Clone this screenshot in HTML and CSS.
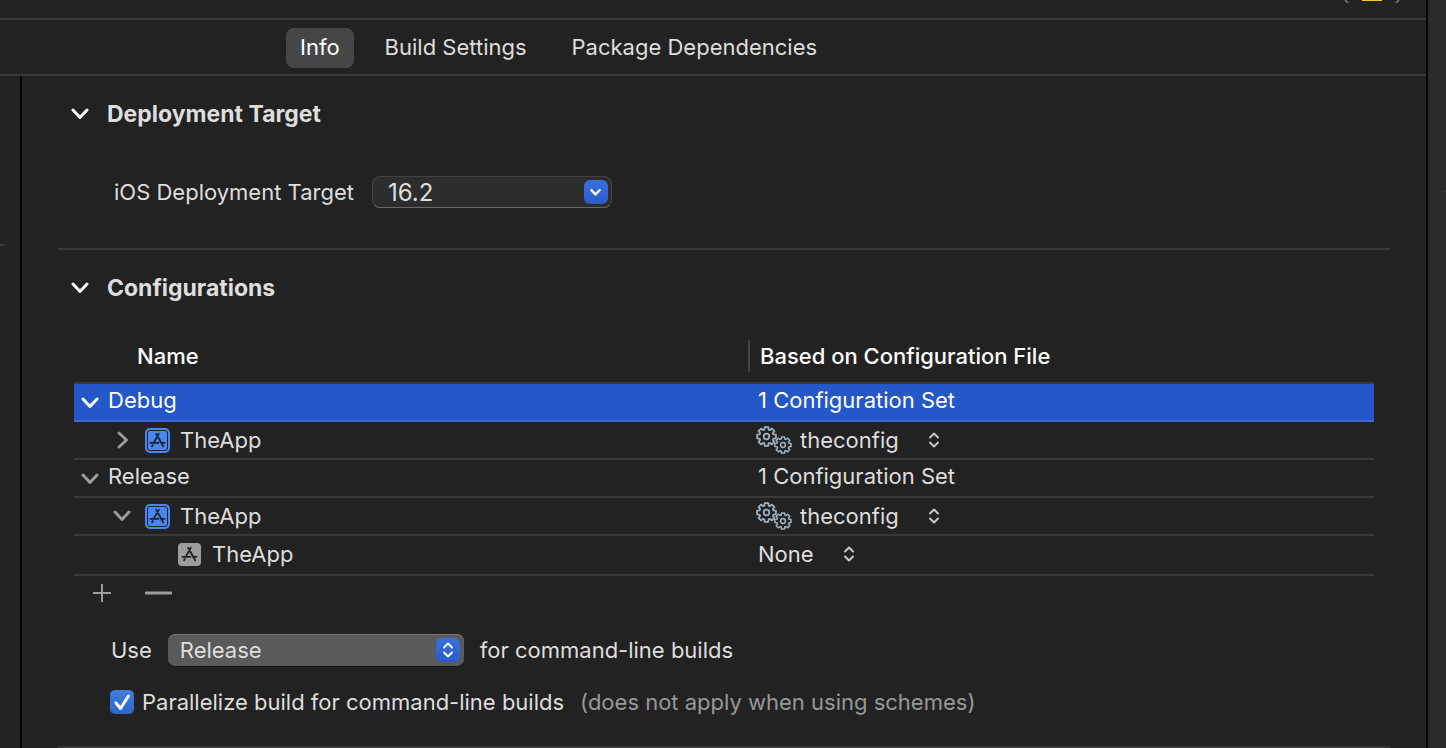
FILE: index.html
```html
<!DOCTYPE html>
<html lang="en">
<head>
<meta charset="utf-8">
<title>Project Info</title>
<link rel="stylesheet" href="styles.css">
</head>
<body>
<svg class="defs" aria-hidden="true">
  <symbol id="down" viewBox="0 0 18 12"><path d="M2 2l7 7.500L16 2"/></symbol>
  <symbol id="right" viewBox="0 0 12 18"><path d="M3 2l7.500 7L3 16"/></symbol>
  <symbol id="updown" viewBox="0 0 12 18"><path d="M2 6.500L6 2.500l4 4M2 11.500l4 4 4-4"/></symbol>
  <symbol id="store" viewBox="0 0 18 18"><path d="M10.300 2L5.200 11M7.700 2l5.800 10.500M1.500 11.500h8.500M13.300 11.500h3.200M4 13.800l-.7 1.200M14.300 14l.6 1.200"/></symbol>
  <symbol id="gear" viewBox="-12 -12 24 24">
    <path d="M-2.100-10.800H2.100L2.400-7.900 3.900-7.300 6.200-9.100 9.100-6.200 7.300-3.900 7.900-2.400 10.800-2.100V2.100L7.900 2.400 7.300 3.900 9.100 6.200 6.200 9.100 3.900 7.300 2.400 7.900 2.100 10.800H-2.100L-2.400 7.900-3.900 7.300-6.200 9.100-9.100 6.200-7.300 3.900-7.900 2.400-10.800 2.100V-2.100L-7.900-2.400-7.300-3.900-9.100-6.200-6.200-9.100-3.900-7.300-2.400-7.900z"/>
    <circle r="3.200"/>
  </symbol>
  <symbol id="gears" viewBox="0 0 36 28">
    <use href="#gear" x="0" y="0" width="21" height="21"/>
    <use href="#gear" x="18" y="10" width="18" height="18"/>
  </symbol>
</svg>
<div class="window">
  <main class="editor">
    <div class="jumpbar">
      <svg class="issue-nav" viewBox="0 0 56 3"><path class="nav-arrow" d="M1 0l3 3M55 0l-3 3"/><path class="nav-warning" d="M18 0h20"/></svg>
    </div>
    <nav class="tabs" role="tablist">
      <button class="tab selected" role="tab" aria-selected="true">Info</button>
      <button class="tab" role="tab" aria-selected="false">Build Settings</button>
      <button class="tab" role="tab" aria-selected="false">Package Dependencies</button>
    </nav>
    <div class="body">
      <div class="gutter"><span class="tick"></span></div>
      <div class="content">
        <section class="section target">
          <h2 class="heading"><button class="toggle" aria-expanded="true" aria-label="Deployment Target"><svg class="icon down"><use href="#down"/></svg></button>Deployment Target</h2>
          <div class="field">
            <label for="ios">iOS Deployment Target</label>
            <div class="combo">
              <input id="ios" type="text" value="16.2">
              <button class="blue-knob" aria-label="Show versions"><svg class="icon small-down"><use href="#down"/></svg></button>
            </div>
          </div>
        </section>
        <section class="section">
          <h2 class="heading"><button class="toggle" aria-expanded="true" aria-label="Configurations"><svg class="icon down"><use href="#down"/></svg></button>Configurations</h2>
          <div class="configs">
            <table class="grid">
              <thead>
                <tr><th class="name-col">Name</th><th class="file-col"><span class="file-title">Based on Configuration File</span></th></tr>
              </thead>
              <tbody>
                <tr class="group active">
                  <td><div class="cell"><button class="toggle" aria-expanded="true" aria-label="Debug"><svg class="icon down"><use href="#down"/></svg></button><span>Debug</span></div></td>
                  <td>1 Configuration Set</td>
                </tr>
                <tr>
                  <td><div class="cell level-1"><button class="toggle" aria-expanded="false" aria-label="TheApp"><svg class="icon right"><use href="#right"/></svg></button><span class="app project"><svg class="icon"><use href="#store"/></svg></span><span>TheApp</span></div></td>
                  <td><div class="cell popup"><svg class="icon gears"><use href="#gears"/></svg><select class="plain" aria-label="Debug configuration file"><option>theconfig</option></select><svg class="icon updown"><use href="#updown"/></svg></div></td>
                </tr>
                <tr class="group">
                  <td><div class="cell"><button class="toggle" aria-expanded="true" aria-label="Release"><svg class="icon down"><use href="#down"/></svg></button><span>Release</span></div></td>
                  <td>1 Configuration Set</td>
                </tr>
                <tr>
                  <td><div class="cell level-1"><button class="toggle" aria-expanded="true" aria-label="TheApp"><svg class="icon down"><use href="#down"/></svg></button><span class="app project"><svg class="icon"><use href="#store"/></svg></span><span>TheApp</span></div></td>
                  <td><div class="cell popup"><svg class="icon gears"><use href="#gears"/></svg><select class="plain" aria-label="Release configuration file"><option>theconfig</option></select><svg class="icon updown"><use href="#updown"/></svg></div></td>
                </tr>
                <tr class="last">
                  <td><div class="cell level-2"><span class="app"><svg class="icon"><use href="#store"/></svg></span><span>TheApp</span></div></td>
                  <td><div class="cell popup"><select class="plain" aria-label="Target configuration file"><option>None</option></select><svg class="icon updown"><use href="#updown"/></svg></div></td>
                </tr>
              </tbody>
            </table>
            <div class="actions">
              <button class="action" aria-label="Add configuration"><svg class="icon" width="18" height="18" viewBox="0 0 18 18"><path d="M9 0v18M0 9h18"/></svg></button>
              <button class="action remove" aria-label="Remove configuration"><svg class="icon" width="27" height="18" viewBox="0 0 27 18"><path d="M1 9h25"/></svg></button>
            </div>
            <div class="use">
              <label for="cli">Use</label>
              <div class="picker">
                <select id="cli"><option>Release</option><option>Debug</option></select>
                <span class="blue-knob"><svg class="icon updown"><use href="#updown"/></svg></span>
              </div>
              <span>for command-line builds</span>
            </div>
            <div class="parallel">
              <span class="check">
                <input id="par" type="checkbox" checked>
                <svg class="icon mark" viewBox="0 0 24 24"><path d="M6 13l4.500 5.500L18.500 6"/></svg>
              </span>
              <label for="par">Parallelize build for command-line builds</label>
              <span class="note">(does not apply when using schemes)</span>
            </div>
          </div>
        </section>
      </div>
    </div>
  </main>
  <aside class="side"><span class="tick"></span></aside>
</div>
</body>
</html>
```
FILE: styles.css
```css
* { box-sizing: border-box; }
body {
  margin: 0;
  background: #222222;
  color: #dedede;
  font: 22px/28px Inter, "Liberation Sans", sans-serif;
}
button, input, select {
  margin: 0;
  padding: 0;
  border: 0;
  background: none;
  color: inherit;
  font: inherit;
  appearance: none;
}
.defs { position: absolute; width: 0; height: 0; }
.icon {
  display: block;
  fill: none;
  stroke: currentColor;
  stroke-width: 2;
  stroke-linecap: round;
  stroke-linejoin: round;
}
.down { width: 18px; height: 12px; stroke-width: 3; }
.right { width: 12px; height: 18px; stroke-width: 3; }
.updown { width: 12px; height: 18px; stroke-width: 2; }

.window { display: flex; min-height: 100vh; }
.editor {
  flex: 1;
  display: flex;
  flex-direction: column;
  border-right: 2px solid #000;
}
.side { width: 18px; padding-top: 190px; background: #2b2b2b; }
.tick { display: block; width: 4px; height: 2px; background: #3b3b3b; }
.side .tick { width: 2px; margin-left: auto; }

.jumpbar {
  display: flex;
  justify-content: flex-end;
  height: 20px;
  padding-right: 26px;
  border-bottom: 2px solid #393939;
}
.issue-nav { width: 56px; height: 3px; fill: none; }
.nav-arrow { stroke: #6a6a6a; stroke-width: 2; }
.nav-warning { stroke: #f5c242; stroke-width: 2; }

.tabs {
  display: flex;
  gap: 17px;
  padding: 8px 0 6px 286px;
  border-bottom: 2px solid #393939;
}
.tab { height: 40px; padding: 0 14px 2px; border-radius: 8px; }
.tab.selected { background: #464646; color: #fff; }

.body { flex: 1; display: flex; }
.gutter { width: 22px; padding-top: 168px; border-right: 2px solid #000; }
.content { flex: 1; padding: 0 36px; }
.section { padding-top: 24px; border-bottom: 2px solid #393939; }
.heading {
  display: flex;
  align-items: center;
  gap: 18px;
  margin: 0;
  padding-left: 13px;
  font-size: 23px;
  font-weight: 700;
}
.heading .toggle { color: #fff; }

.field { display: flex; align-items: center; gap: 18px; padding: 48px 0 40px 56px; }
.combo {
  display: flex;
  align-items: center;
  width: 240px;
  height: 32px;
  padding-right: 3px;
  border: 1px solid #414141;
  border-bottom-color: #686868;
  border-radius: 8px;
  background: #2d2d2d;
}
.combo input { flex: 1; min-width: 0; padding: 2px 0 0 15px; font-size: 24px; line-height: 28px; }
.blue-knob {
  display: grid;
  place-items: center;
  width: 24px;
  height: 24px;
  border-radius: 6px;
  background: linear-gradient(#3a6fe0, #2a5ccb);
  color: #fff;
}
.small-down { width: 11px; height: 7px; stroke-width: 4; }

.configs { padding: 28px 16px 30px; }
.grid { width: 100%; border-collapse: collapse; table-layout: fixed; }
th { height: 53px; padding: 0; text-align: left; font-weight: 500; color: #fff; border-bottom: 2px solid #393939; }
.name-col { width: 52%; padding-left: 63px; }
.file-title { display: block; margin-left: -2px; padding: 2px 0 2px 10px; border-left: 2px solid #464646; }
td { height: 38px; padding: 0 0 0 8px; border-bottom: 2px solid #393939; }
td:first-child { padding-left: 7px; }
.group td { padding-bottom: 4px; }
.active td { background: #2457ca; color: #fff; border-bottom-color: #3b69d0; }
.last td { height: 40px; padding-bottom: 2px; }
.cell { display: flex; align-items: center; }
.cell .toggle { display: grid; place-items: center; width: 18px; margin-right: 9px; color: #9c9c9c; }
.group .toggle { padding-top: 6px; }
.active .toggle { color: #fff; }
.level-1 { padding-left: 32px; }
.level-1 .toggle { margin-right: 14px; }
.level-2 { padding-left: 97px; }
.app {
  display: grid;
  place-items: center;
  width: 23px;
  height: 23px;
  margin-right: 11px;
  border-radius: 4px;
  background: #9d9d9d;
  color: #222;
}
.app .icon { width: 17px; height: 17px; }
.app.project {
  width: 25px;
  height: 25px;
  margin-right: 10px;
  border: 2px solid #4787ef;
  border-radius: 5px;
  background: #4787ef;
  box-shadow: inset 0 0 0 1px #222;
}
.gears { width: 36px; height: 28px; margin: 0 8px 0 -2px; color: #9fb2c2; }
.popup .updown { margin-left: 29px; color: #c8c8c8; }

.actions { display: flex; align-items: center; gap: 34px; padding: 8px 0 0 19px; color: #9c9c9c; }
.remove .icon { stroke-width: 3; }

.use { display: flex; align-items: center; gap: 16px; padding: 32px 0 0 37px; }
.picker {
  display: flex;
  align-items: center;
  position: relative;
  width: 296px;
  height: 32px;
  border-radius: 7px;
  background: #5a5a5a;
  box-shadow: inset 0 1px 0 #767676, 0 1px 1px #111;
}
.picker select { width: 100%; height: 32px; padding-left: 12px; }
.picker .blue-knob { position: absolute; right: 4px; top: 4px; pointer-events: none; }

.parallel { display: flex; align-items: center; padding: 22px 0 0 36px; }
.check { position: relative; width: 24px; height: 24px; margin-right: 8px; }
.check input {
  display: block;
  width: 24px;
  height: 24px;
  border-radius: 5px;
  background: linear-gradient(#3f7ee0, #2c66c6);
}
.mark { position: absolute; inset: 0; stroke: #fff; stroke-width: 3; pointer-events: none; }
.note { margin-left: 16px; color: #989898; }
```
